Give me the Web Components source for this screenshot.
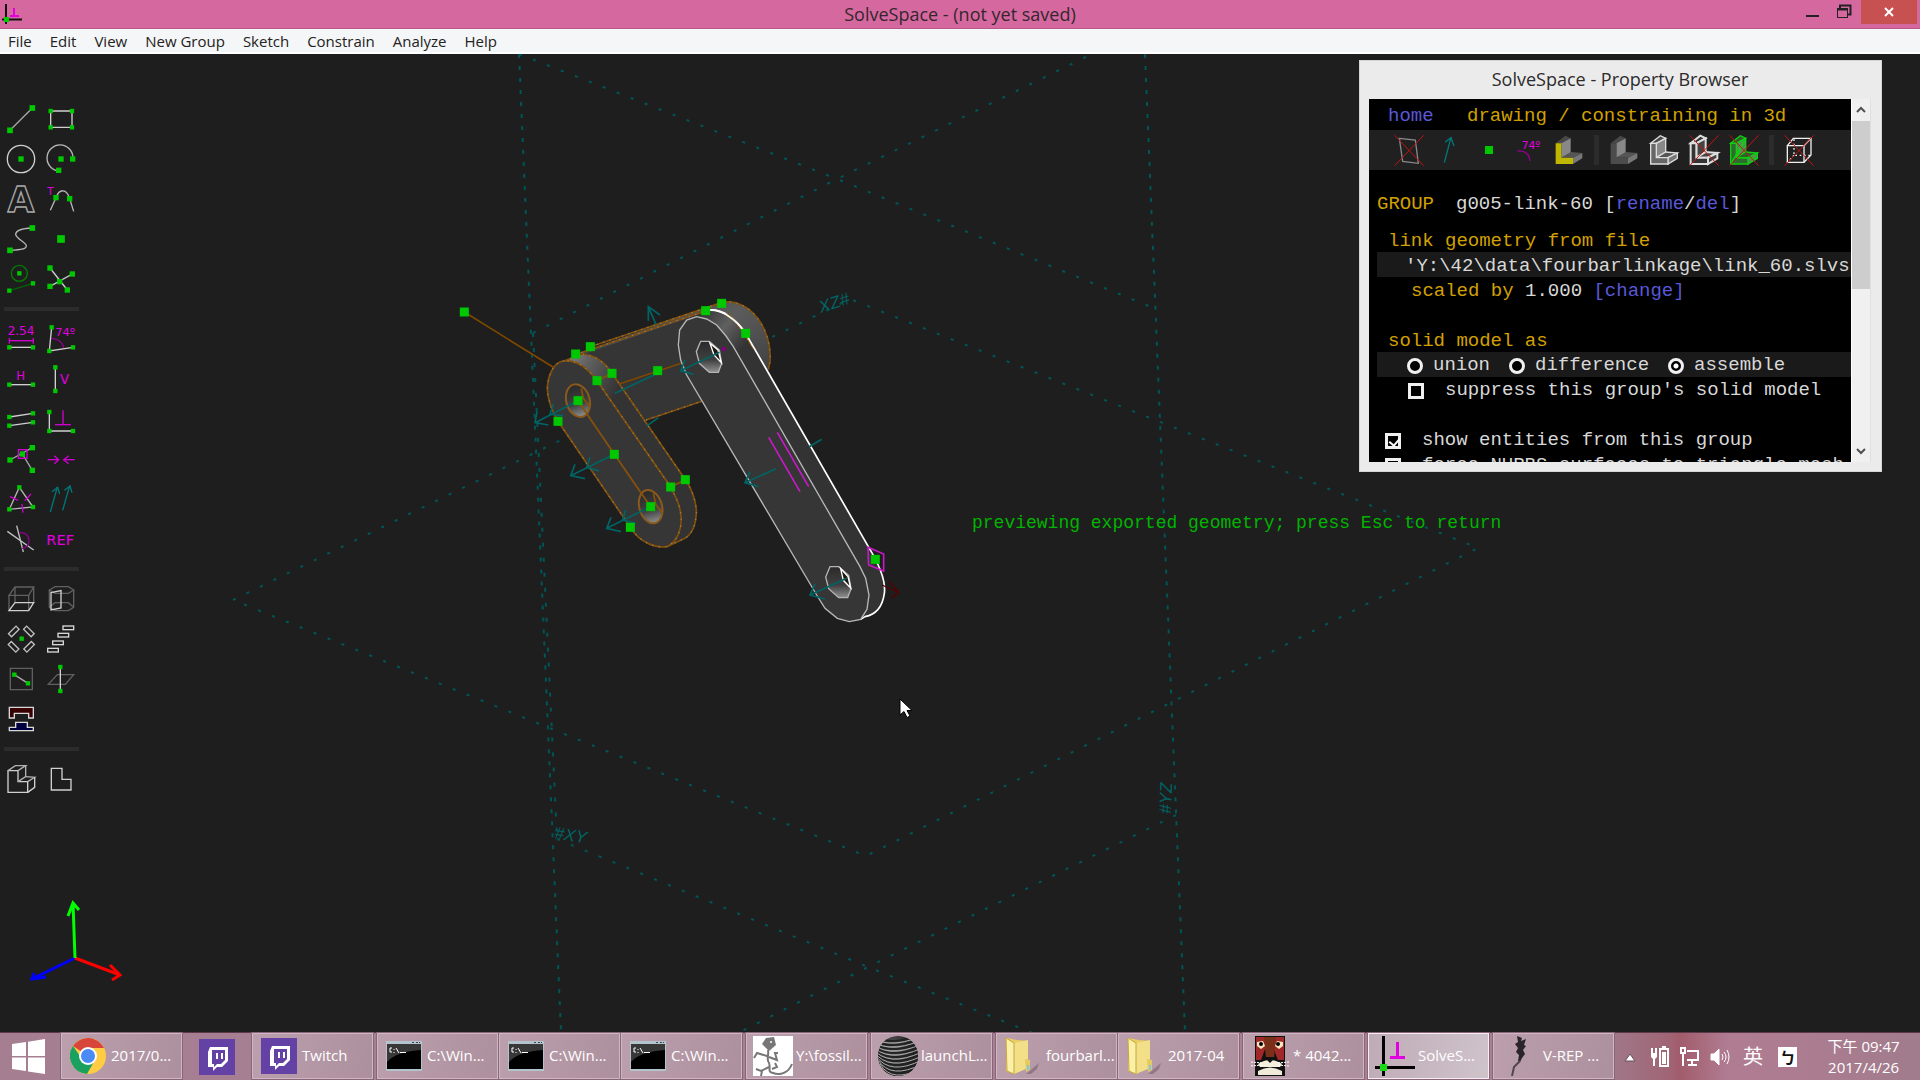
<!DOCTYPE html>
<html lang="en">
<head>
<meta charset="utf-8">
<title>SolveSpace</title>
<style>
html,body{height:100%;margin:0}
body{background:#1e1e1e;font-family:"Open Sans","Noto Sans CJK TC",sans-serif;overflow:hidden}
</style>
</head>
<body>
<ss-desktop></ss-desktop>
<script>
const RESET = `*{box-sizing:border-box}button{font:inherit;color:inherit;background:none;border:0;padding:0;margin:0;cursor:default}svg{display:block}`;
function define(name, css, html, init) {
  const tpl = document.createElement('template');
  customElements.define(name, class extends HTMLElement {
    constructor() {
      super();
      const root = this.attachShadow({ mode: 'open' });
      tpl.innerHTML = `<style>${RESET}${css}</style>${typeof html === 'function' ? html(this) : html}`;
      root.append(tpl.content.cloneNode(true));
      if (init) init(root, this);
    }
  });
}

/* ---- small drawing helpers ---- */
const sq = (s, ...pts) => pts.map(([x, y]) => `<rect x="${x - s / 2}" y="${y - s / 2}" width="${s}" height="${s}" fill="#00c800"/>`).join('');
const pl = (pts, c = '#d0d0d0', w = 4, f = 'none') => `<polyline points="${pts}" fill="${f}" stroke="${c}" stroke-width="${w}"/>`;
const pg = (pts, c = '#d0d0d0', w = 4, f = 'none') => `<polygon points="${pts}" fill="${f}" stroke="${c}" stroke-width="${w}"/>`;
const pa = (d, c = '#b8b8b8', w = 4, f = 'none') => `<path d="${d}" fill="${f}" stroke="${c}" stroke-width="${w}"/>`;
const tx = (x, y, s, t, c = '#e000e0') => `<text x="${x}" y="${y}" font-family="DejaVu Sans" font-size="${s}" fill="${c}">${t}</text>`;
const M = '#d000d0', G = '#606060', T = '#007878';

/* tool palette: [label, x, y, drawing]; three units to a pixel */
const TOOLS = [
 ['Line', 3, 27, pl('30,121 97,54', '#a8a8a8') + sq(17, [30,121], [97,54])],
 ['Rectangle', 123, 27, pg('152,63 216,63 216,112 152,112') + sq(13, [152,63], [216,63], [216,112], [152,112])],
 ['Circle', 3, 147, `<circle cx="63" cy="207" r="41" fill="none" stroke="#d0d0d0" stroke-width="4"/>` + sq(16, [63,207])],
 ['Arc', 123, 147, pa('M219 201A39 39 0 1 0 172 242') + sq(16, [183,207], [218,207], [176,241])],
 ['Text', 3, 267, `<text x="63" y="367" text-anchor="middle" font-family="DejaVu Sans" font-weight="bold" font-size="104" fill="none" stroke="#a8a8a8" stroke-width="4">A</text>`],
 ['Tangent arc', 123, 267, pa('M151 361L168 323C178 295 200 295 209 326L221 364') + tx(142, 315, 31, 'T') + sq(16, [168,323], [209,326])],
 ['Bezier', 3, 387, pa('M97 414C65 415 48 420 47 433C47 446 79 457 79 467C79 478 60 479 30 481') + sq(17, [30,481], [97,414])],
 ['Point', 123, 387, sq(23, [183,447])],
 ['Construction', 3, 507, `<circle cx="58" cy="550" r="24" fill="none" stroke="#008000" stroke-width="4"/>` + pl('28,602 99,580', '#006400') + sq(13, [58,550], [28,602], [99,580])],
 ['Split curves', 123, 507, pl('150,534 202,600') + pl('150,589 217,552') + sq(16, [150,534], [202,600], [150,589], [217,552], [179,575])],
 0,
 ['Distance', 3, 27, tx(23, 76, 36, '2.54') + pl('28,92 100,92', M) + pl('28,84 28,101', M) + pl('100,84 100,101', M) + pl('28,112 99,112') + sq(13, [28,112], [99,112])],
 ['Angle', 123, 27, pl('155,52 148,123 219,112') + pa('M155 85Q185 87 191 113', '#900090') + tx(166, 79, 34, '74º') + sq(13, [155,52], [148,123], [219,112])],
 ['Horizontal', 3, 147, tx(49, 210, 35, 'H') + pl('28,224 99,224') + sq(13, [28,224], [99,224])],
 ['Vertical', 123, 147, tx(180, 222, 40, 'V') + pl('166,172 166,243') + sq(13, [166,172], [166,243])],
 ['Parallel', 3, 267, pl('28,321 99,310') + pl('28,347 99,337') + sq(13, [28,321], [99,310], [28,347], [99,337])],
 ['Perpendicular', 123, 267, pl('148,306 148,363 219,363') + pl('189,301 189,344', M) + pl('165,344 213,344', M) + sq(13, [148,306], [148,363], [219,363])],
 ['On point', 3, 387, pl('30,450 97,413', '#a8a8a8') + pl('67,432 97,481', '#a8a8a8') + sq(16, [30,450], [97,413], [97,481], [67,432]) + `<rect x="55" y="419" width="26" height="26" fill="none" stroke="${M}" stroke-width="4"/>`],
 ['Symmetric', 123, 387, pl('143,449 176,449', M) + pl('163,437 176,449 163,461', M) + pl('224,449 191,449', M) + pl('206,437 191,449 206,461', M)],
 ['Equal', 3, 507, pg('58,532 28,598 99,591', '#b8b8b8') + pl('30,560 54,571', M) + pl('74,572 93,552', M) + pl('66,582 69,608', M) + sq(13, [58,532], [28,598], [99,591])],
 ['Same orientation', 123, 507, pl('151,606 172,531', T) + pl('156,545 173,532 179,552', T) + pl('188,601 209,527', T) + pl('193,541 210,528 216,548', T)],
 ['Other angle', 3, 627, pl('22,664 101,720', '#c0c0c0') + pl('50,647 70,726', '#c0c0c0') + pa('M58 668C95 663 95 717 66 715', '#900090')],
 ['Reference', 123, 627, tx(139, 705, 44, 'REF')],
 0,
 ['Extrude', 3, 27, pg('27,76 86,76 101,51 45,51', G) + pl('27,76 27,122', G) + pl('86,76 86,122', G) + pl('101,51 101,98', G) + pl('45,51 45,98', G) + pg('27,122 86,122 101,98 45,98')],
 ['Lathe', 123, 27, pg('148,60 165,50 205,50 221,60 205,70 165,70', G) + pl('148,60 148,112 165,122 205,122 221,112 221,60', G) + pl('148,112 165,98 205,98 221,112', G) + pg('153,68 183,62 183,114 153,120')],
 ['Step rotating', 3, 147, [[41,184,-45],[87,184,45],[41,230,45],[87,230,-45]].map(([x,y,r]) => `<rect x="-16" y="-6" width="32" height="13" transform="translate(${x} ${y}) rotate(${r})" fill="none" stroke="#c0c0c0" stroke-width="4"/>`).join('') + sq(13, [65,206])],
 ['Step translating', 123, 147, [[205,173],[190,195],[174,218],[159,240]].map(([x,y]) => `<rect x="${x-16}" y="${y-5}" width="32" height="11" fill="none" stroke="#d8d8d8" stroke-width="4"/>`).join('')],
 ['New workplane', 3, 267, pg('31,295 97,295 97,359 31,359', G) + pl('43,314 84,340', '#a8a8a8') + sq(13, [43,314], [84,340])],
 ['Sketch in 3d', 123, 267, pg('145,343 196,343 221,314 172,314', G) + pl('181,291 181,363') + sq(13, [181,291], [181,363])],
 ['Link', 3, 387, pg('28,412 100,412 100,444 86,444 86,430 43,430 43,444 28,444', '#d8d8d8', 4, '#380000') + pg('47,457 82,457 82,472 100,472 100,482 28,482 28,472 47,472', '#d8d8d8', 4, '#000040')],
 ['', 123, 387, ''],
 0,
 ['Nearest isometric view', 3, 567, pg('24,602 54,602 54,635 83,635 83,667 24,667') + pl('24,602 46,587 77,587 54,602', '#b0b0b0') + pl('77,587 77,620 54,635', '#b0b0b0') + pl('77,620 104,622 83,635', '#b0b0b0') + pl('104,622 104,652 83,667')],
 ['Align view', 123, 567, pg('154,595 186,595 186,628 213,628 213,660 154,660')]
];

define('ss-toolbar', `:host{display:grid;grid-template-columns:40px 40px;grid-auto-rows:auto;padding:45px 0 0 1px;align-content:start}
button,span{display:block;width:40px;height:40px}
hr{grid-column:1/3;height:4px;width:75px;margin:8px 0 8px 3px;border:0;background:#2c2c2c}`,
 TOOLS.map(t => t === 0 ? '<hr>' : t[3] ? `<button type="button" aria-label="${t[0]}"><svg width="40" height="40" viewBox="${t[1]} ${t[2]} 120 120">${t[3]}</svg></button>` : '<span></span>').join(''));

/* ---- title bar and menu ---- */
define('ss-titlebar', `:host{display:flex;align-items:flex-start;height:29px;background:#d668a0;border-bottom:1px solid #b8588a;color:#33232b}
.logo{flex:0 0 160px}.t{flex:1;text-align:center;font-size:18px;line-height:28px;color:#35262e}
.c{display:flex;flex:0 0 160px;justify-content:flex-end;padding-right:3px}
.c button{width:33px;height:24px}.c .x{width:56px;background:#c75050}`,
`<div class="logo"><svg width="26" height="28"><path d="M6 4V24M2 19.500H22" stroke="#111" stroke-width="2"/><path d="M14 8V16M10 16H19" stroke="#e000e0" stroke-width="2"/><rect x="4" y="17" width="5" height="5" fill="#0c0"/></svg></div>
<div class="t"><slot></slot></div>
<div class="c"><button aria-label="Minimize"><svg width="33" height="24"><path d="M11 16h13" stroke="#222" stroke-width="2"/></svg></button>
<button aria-label="Restore"><svg width="33" height="24" fill="none" stroke="#222"><rect x="9.500" y="8.500" width="10" height="9"/><path d="M9 9.500h11M12 8V5.500h10.500v9H20M12 5.500h10" stroke-width="2"/></svg></button>
<button class="x" aria-label="Close"><svg width="56" height="24"><path d="M24 8l8 8M32 8l-8 8" stroke="#fff" stroke-width="2"/></svg></button></div>`);

define('ss-menubar', `:host{display:flex;gap:18px;height:25px;padding-left:8px;background:#f5f6f7;color:#222;font-size:15px;line-height:24px;border-bottom:2px solid #fff}`,
 ['File','Edit','View','New Group','Sketch','Constrain','Analyze','Help'].map(t => `<button type="button">${t}</button>`).join(''));

/* ---- 3d canvas ---- */
const dash = (pts, d = '3 12') => `<polyline points="${pts}" stroke-dasharray="${d}"/>`;
const arrow = (a, b, c, d) => `<path d="M${a}L${b}M${c}L${b}L${d}"/>`;
const edge = d => `<path d="${d}" fill="none" stroke="#845008" stroke-width="5"/><path d="${d}" fill="none" stroke="#a09888" stroke-opacity=".6" stroke-width="4" stroke-dasharray="4 16"/>`;
const hole1 = '782,184 808,184 838,210 845,250 835,277 808,277 778,250 769,215';
const face = 'M740 285L722 240L715 195L719 150L740 120L770 110L800 117L830 135L858 168L880 200L1260 860L1277 895L1287 945L1281 988L1262 1018L1228 1025L1192 1015L1155 985L1130 945Z';
define('ss-canvas', `:host{display:block;min-height:0}svg{width:100%;height:100%}`,
`<svg viewBox="0 54 1920 978" preserveAspectRatio="xMidYMid slice">
<defs>
<linearGradient id="b" x1="0" y1="0" x2="1" y2="1"><stop offset="0" stop-color="#333"/><stop offset=".45" stop-color="#5c5c5c"/><stop offset="1" stop-color="#303030"/></linearGradient>
<linearGradient id="h" x1="0" y1="0" x2="0" y2="1"><stop offset="0" stop-color="#2a2a2a"/><stop offset=".6" stop-color="#404040"/><stop offset="1" stop-color="#909090"/></linearGradient>
<linearGradient id="s" gradientUnits="userSpaceOnUse" x1="790" y1="90" x2="920" y2="190"><stop offset="0" stop-color="#333"/><stop offset=".5" stop-color="#606060"/><stop offset="1" stop-color="#333"/></linearGradient>
<linearGradient id="l" gradientUnits="userSpaceOnUse" x1="370" y1="220" x2="540" y2="320"><stop offset="0" stop-color="#888"/><stop offset=".4" stop-color="#606060"/><stop offset="1" stop-color="#333"/></linearGradient>
</defs>
<g fill="none" stroke="#005656" stroke-width="2">
${dash('233,600 850,299 1478,548 866,856 233,600')}
${dash('533,333 837,179 1100,50')}${dash('519,54 837,179 1156,309')}
${dash('557,839 868,967 1040,1036')}${dash('1176,815 868,967 740,1032')}
${dash('519,54 561,1032','4 8')}${dash('533,333 557,839','4 11')}${dash('1145,54 1185,1032','4 8')}
</g>
<g font-family="Liberation Sans" font-size="17" font-style="italic" fill="#006464">
<text transform="translate(554 838) rotate(10)">#XY</text><text transform="translate(821 313) rotate(-18)">XZ#</text><text transform="translate(1171 814) rotate(-88)">#YZ</text></g>
<g transform="translate(440 280) scale(.33333)">
<path d="M425 215L845 66C930 50 998 150 990 245L985 268L790 362L618 420Z" fill="url(#b)"/><path d="M425 225L797 95L800 360L618 420Z" fill="#353535"/>
${edge('M405 224L797 93')}${edge('M451 200L845 68C930 50 998 150 990 245L985 268')}${edge('M618 420L790 362')}
<path d="M340 262L73 96M538 312L728 248" stroke="#7d4800" stroke-width="5"/>
<path d="M770 110L805 90Q865 85 917 160L1290 805Q1340 890 1333 940Q1325 1000 1275 1010L1228 1025Z" fill="url(#s)"/>
<path d="M805 90Q865 85 917 160" fill="none" stroke="#fff" stroke-width="6"/>
${edge('M860 100Q890 120 940 206')}
<path d="M812 90Q865 90 917 160L1285 800Q1340 890 1333 940Q1325 1000 1275 1010L1262 1018" fill="none" stroke="#fff" stroke-width="5"/>
<path d="${face}" fill="#363636" stroke="#b8b8b8" stroke-width="4"/>
<g><polygon points="${hole1}" fill="url(#h)" stroke="#b4b4b4" stroke-width="4"/><path d="M810 190L822 225L844 248L834 210Z" fill="#20180e" stroke="#fff" stroke-width="4"/></g>
<g transform="translate(388 676)"><polygon points="${hole1}" fill="url(#h)" stroke="#b4b4b4" stroke-width="4"/><path d="M814 190L822 225L844 248L836 214Z" fill="#20180e" stroke="#fff" stroke-width="4"/></g>
<path d="M372 243L425 222C470 225 500 255 516 280L736 599C765 640 772 690 768 710C765 750 745 770 735 775L680 800Z" fill="url(#l)"/>
${edge('M372 243L425 222C470 225 500 255 516 280L736 599C765 640 772 690 768 710C765 750 745 770 735 775L680 800')}
<path d="M372 243C340 245 322 290 322 330C325 370 340 400 354 424L571 742C600 790 650 805 680 800C715 785 728 740 722 700C718 665 700 640 692 621L471 302C440 260 410 240 372 243Z" fill="#363636"/>
${edge('M372 243C340 245 322 290 322 330C325 370 340 400 354 424L571 742C600 790 650 805 680 800C715 785 728 740 722 700C718 665 700 640 692 621L471 302C440 260 410 240 372 243Z')}
<g fill="url(#h)" stroke="#8a5a1c" stroke-width="6"><ellipse cx="414" cy="362" rx="35" ry="50" transform="rotate(-16 414 362)"/><ellipse cx="632" cy="680" rx="34" ry="51" transform="rotate(-16 632 680)"/></g>
<path d="M424 325L430 355L450 380M640 640L648 675L668 700M414 362L523 523L632 680M471 302L516 280M692 621L736 599" fill="none" stroke="#8a5208" stroke-width="5"/>
<g fill="none" stroke="#006464" stroke-width="5">
${arrow('414 362','285 428','291 395','325 435')}<path d="M340 372L330 403L370 407"/>
${arrow('648 133','625 80','625 122','660 105')}
${arrow('523 523','392 587','405 553','435 596')}<path d="M450 532L440 562L478 573"/>
${arrow('632 680','500 745','513 712','543 755')}<path d="M557 690L548 720L587 730"/>
<path d="M653 280L525 340M655 413L620 438M1145 478L1108 500"/>
${arrow('838 217','722 272','735 240','760 283')}${arrow('1008 566','915 608','930 575','955 620')}${arrow('1220 895','1110 945','1125 912','1155 957')}</g>
<path d="M986 472L1080 635M1012 457L1106 620M1284 802L1331 822L1331 873L1286 855Z" fill="none" stroke="#c818c8" stroke-width="5"/>
<circle cx="851" cy="207" r="7" fill="#800080"/>
<path d="M1326 915L1376 937M1348 905L1376 937L1353 955" fill="none" stroke="#580000" stroke-width="4"/>
${sq(27,[73,96],[797,92],[845,70],[917,160],[451,200],[407,222],[516,280],[471,302],[414,362],[354,424],[523,523],[653,272],[736,599],[692,621],[632,680],[571,742],[1306,838])}
</g>
<text x="972" y="528" font-family="Liberation Mono" font-size="18" fill="#00b400">previewing exported geometry; press Esc to return</text>
<g fill="none" stroke-width="3"><path d="M75 958L32 979M34 973L32 979L46 977" stroke="#00f"/><path d="M75 958L120 975M110 965L120 975L112 980" stroke="#f00"/><path d="M75 958L73 903M68 916L73 903L79 910" stroke="#0f0"/></g>
<path d="M900 699v16l4-3.500 3 6 3-1.500-3-5.500h5z" fill="#fff" stroke="#000" stroke-width="1"/>
</svg>`);

/* ---- property browser ---- */
const cross = c => pl(`${c-43},256 ${c+44},347`, '#c01414', 3) + pl(`${c+44},256 ${c-43},347`, '#c01414', 3);
const ell = (o, f, faces, line, w = 4) => {
  const s = line || 'none', q = (p, c) => pg(p.map(([x, y]) => `${x + o},${y}`).join(' '), s, w, c);
  return q([[596,280],[625,257],[641,265],[613,280]], faces[0]) + q([[613,280],[641,265],[641,308],[613,323]], faces[1]) + q([[613,323],[641,306],[676,309],[648,323]], faces[2]) + q([[648,323],[676,309],[676,325],[648,342]], faces[3]) + q([[596,280],[613,280],[613,323],[648,323],[648,342],[596,342]], f);
};
const grey = ['#484848', '#888', '#555', '#777'];
const SHOW = [
 ['workplanes', 171, pg('142,265 190,270 199,340 152,334', '#888') + cross(171)],
 ['normals', 289, pl('275,338 295,262', T) + pl('277,277 295,263 304,288', T)],
 ['points', 403, sq(24, [403,300])],
 ['constraints', 520, tx(498, 297, 32, '74º', '#e000e0') + pa('M485 303Q520 300 523 333', '#900090')],
 ['faces', 636, ell(0, '#c0b800', grey)],
 0,
 ['shaded', 797, ell(161, '#4c4c4c', grey)],
 ['edges', 913, ell(277, '#666', grey, '#ddd')],
 ['outlines', 1029, ell(393, '#333', ['#333','#444','#444','#444'], '#ddd', 6) + cross(1029)],
 ['mesh', 1146, ell(510, '#2c6c2c', ['#2a602a','#5b8a5b','#2a602a','#5b8a5b'], '#10d010') + pl('1106,342 1151,265 1123,323 1186,325', '#10d010') + cross(1146)],
 0,
 ['hidden lines', 1305, pg('1270,287 1320,287 1320,337 1270,337', '#eee') + pl('1270,287 1288,265 1341,265 1341,315 1320,337', '#eee') + pl('1320,287 1341,265', '#eee') + `<path d="M1290 268V316H1338M1290 316L1272 335" fill="none" stroke="#eee" stroke-width="4" stroke-dasharray="5 8"/>` + cross(1305)]
];
define('ss-properties', `:host{display:flex;flex-direction:column;width:523px;background:#ebebeb;border:1px solid #d4d4d4;padding:0 10px 9px 9px;color:#2c2c2c}
h2{margin:0;font-weight:400;font-size:18px;line-height:36px;padding-bottom:2px;text-align:center}
.w{display:flex;height:363px}
.p{flex:1;min-width:0;overflow:hidden;background:#000;color:#d8d8d8;font:19px/25px "Liberation Mono",monospace;white-space:pre}
a{color:#5858d8;text-decoration:none}.y{color:#d2a000}
.r{display:flex;height:25px;padding-top:2px}.i0{padding-left:8px}.i1{padding-left:19px}.i2{padding-left:42px}
.top{height:31px;line-height:31px}.top a{width:79px}
.ic{display:flex;height:40px;background:#202020;padding-left:20px;margin-bottom:20px}.ic button{width:40px;height:40px}.ic i{width:5px;margin:5px;background:#2c2c2c;height:30px}
.g{margin-bottom:12px}.g .y{width:79px}.b{margin-left:8px;background:#1a1a1a}.f{padding-left:28px}
.m{margin-bottom:25px}
label{display:flex;align-items:center}
input{appearance:none;margin:0;width:16px;height:16px;border:3px solid #f0f0f0;background:#000;flex:none}
input[type=radio]{border-radius:50%}.o{padding-left:30px}.o label{gap:10px;margin-right:19px}
input[type=radio]:checked{background:radial-gradient(circle,#fff 0 2px,#000 3px)}
.k label{gap:21px}.k.i1{padding-left:16px}.k.i2{padding-left:39px}
input[type=checkbox]:checked::before{content:"";display:block;width:5px;height:8px;margin-left:3px;border:solid #fff;border-width:0 2px 2px 0;transform:rotate(40deg)}
.s{width:20px;background:#f0f0f0;border-left:1px solid #fff;border-right:1px solid #e0e0e0;display:flex;flex-direction:column}
.s button{height:22px;width:100%}.s div{flex:0 0 168px;background:#cdcdcd}.s span{flex:1}`,
`<h2><slot></slot></h2><div class="w"><div class="p"><div class="r i1 top"><a href="#home">home</a><span class="y">drawing / constraining in 3d</span></div><div class="ic">${SHOW.map(s => s ? `<button type="button" aria-label="${s[0]}"><svg width="40" height="40" viewBox="${s[1] - 60} 240 120 120">${s[2]}</svg></button>` : '<i></i>').join('')}</div><div class="r i0 g"><span class="y">GROUP</span><span>g005-link-60 [<a href="#rename">rename</a>/<a href="#del">del</a>]</span></div><div class="r i1 y">link geometry from file</div><div class="r b f">'Y:\\42\\data\\fourbarlinkage\\link_60.slvs</div><div class="r i2 m"><span class="y">scaled by</span><span> 1.000 </span><a href="#change">[change]</a></div><div class="r i1 y">solid model as</div><div class="r b o"><label><input type="radio" name="m">union</label><label><input type="radio" name="m">difference</label><label><input type="radio" name="m" checked>assemble</label></div><div class="r i2 k m"><label><input type="checkbox">suppress this group's solid model</label></div><div class="r i1 k"><label><input type="checkbox" checked>show entities from this group</label></div><div class="r i1 k"><label><input type="checkbox">force NURBS surfaces to triangle mesh</label></div></div>
<div class="s"><button aria-label="Scroll up"><svg width="18" height="22"><path d="M5 13l4-4 4 4" fill="none" stroke="#505050" stroke-width="2"/></svg></button><div></div><span></span><button aria-label="Scroll down"><svg width="18" height="22"><path d="M5 9l4 4 4-4" fill="none" stroke="#505050" stroke-width="2"/></svg></button></div></div>`);

/* ---- taskbar ---- */
const twitch = `<svg width="36" height="36"><rect width="36" height="36" fill="#6441a5"/><path d="M11 8h18v14l-6 6h-5l-4 4v-4H9V13z" fill="#fff"/><path d="M13 11h13v10l-4 4h-4l-3 3v-3h-2z" fill="#6441a5"/><path d="M18 14v6M23 14v6" stroke="#fff" stroke-width="2"/></svg>`;
const folder = `<svg width="36" height="40"><path d="M21 38L34 27L32 33L26 38Z" fill="#5a4650" opacity=".4"/><path d="M1 2L12 4L23 5V30L9 38L1 35Z" fill="#e8cf62"/><path d="M9 7L23 4V32L9 38Z" fill="#f2df88"/><path d="M1 2L9 7V38L2 35Z" fill="#fbf0a8" stroke="#c8a838" stroke-width="1"/><path d="M20 23L25 24V34L21 36Z" fill="#e4c860"/><path d="M23 29v5" stroke="#78c8f0" stroke-width="2"/></svg>`;
const cmd = `<svg width="36" height="32"><rect x="0" y="1" width="36" height="30" fill="#b4c4cc"/><rect x="1" y="4" width="34" height="25" fill="#000"/><path d="M1 4H35V10C20 11 8 14 1 22Z" fill="#383838"/><path d="M6 8H4V12H6M8 9v1M8 12v1M10 8l3 5M14 12.500h6" fill="none" stroke="#fff"/><path d="M26 2.500h2M30 2.500h2M33 2.500h1" stroke="#445"/></svg>`;
const swirl = (c, w, from) => Array.from({ length: 12 }, (_, n) => `<path d="M${-14 + n * 2} ${from + n * 4 - 6}Q${6 + n} ${from + n * 4 + 14} 44 ${from + n * 4 - 2}" stroke="${c}" stroke-width="${w}"/>`).join('');
const ICONS = {
 twitch, folder, cmd,
 chrome: `<svg width="36" height="36" viewBox="0 0 36 36"><circle cx="18" cy="18" r="18" fill="#fc4"/><path d="M18 18L3 8A18 18 0 0 1 34 10H18Z" fill="#d8453a"/><path d="M3 8A18 18 0 0 0 17 36L25 22L18 18L10 18Z" fill="#1aa160"/><circle cx="18" cy="18" r="9" fill="#fff"/><circle cx="18" cy="18" r="7" fill="#4a8af4"/></svg>`,
 fossil: `<svg width="40" height="40"><rect width="40" height="40" fill="#fff"/><path d="M13 2L21 1L23 9L16 15L9 8Z" fill="#777"/><path d="M15 14C16 20 13 23 16 27C18 32 14 36 20 37C28 40 36 36 39 28M14 20L4 17L1 22M16 21L24 24L22 17L25 17M16 31L8 35L3 33M9 35L8 40M19 33L24 31L22 27" fill="none" stroke="#777" stroke-width="2"/><circle cx="18" cy="6" r="1" fill="#fff"/></svg>`,
 ball: `<svg width="40" height="40"><defs><radialGradient id="r" cx=".4" cy=".35"><stop stop-color="#777"/><stop offset="1" stop-color="#1c1c1c"/></radialGradient><clipPath id="c"><circle cx="20" cy="20" r="20"/></clipPath></defs><circle cx="20" cy="20" r="20" fill="url(#r)"/><g clip-path="url(#c)" fill="none">${swirl('#222', 2, 0)}${swirl('#b0b0b0', 1, 2)}</g></svg>`,
 tiger: `<svg width="40" height="40"><rect x="5" y="0" width="30" height="40" fill="#111"/><path d="M6 1H34V24H28L24 14L22 20H18L15 13L11 24H6Z" fill="#a02828"/><path d="M14 1H26L24 22H16Z" fill="#7a3018"/><path d="M7 6l6-1 2 5-4 3-4-3zM33 6l-6-1-2 5 4 3 4-3z" fill="#f4e8c0"/><circle cx="11" cy="8" r="2"/><circle cx="28" cy="8" r="2"/><path d="M8 28Q20 20 32 28L30 31H10Z" fill="#f4f0dc"/><path d="M14 21h12l-6 6z" fill="#111"/><path d="M8 35Q20 28 32 35V39H8Z" fill="#f0ead8"/><path d="M1 26l12 1M1 30l12-1M39 26l-12 1M39 30l-12-1" stroke="#fff" stroke-dasharray="2 1"/></svg>`,
 solve: `<svg width="40" height="40"><path d="M8.500 0V40M0 31.500H40" stroke="#000" stroke-width="3"/><path d="M22.500 6V21M15 21.500H30" stroke="#e000e0" stroke-width="3"/><rect x="5" y="28" width="7" height="7" fill="#18d818"/></svg>`,
 vrep: `<svg width="40" height="40"><path d="M17 0l5 2-1 3 5-2-2 6 2 1-3 4 2 4-3 4-2 4-2-1 1-6-3-3 2-4-3-4 3-2z" fill="#2b2428"/><path d="M20 25L14 31L12 40" stroke="#54464e" stroke-width="2" fill="none"/></svg>`
};
define('ss-task', `:host{display:block;width:121px}:host([gap]){margin-left:3px}
button{display:flex;align-items:center;width:100%;height:46px;padding:0 0 0 6px;border:1px solid #cdb7c3;background:linear-gradient(100deg,#bb9fac,#ac909e);outline:1px solid #8a6579;color:#fff;font-size:15px}
:host([active]) button{background:linear-gradient(100deg,#bfabb6,#cfc3ca);border-color:#f6eef3}
i{width:40px;display:flex;justify-content:center}span{flex:1;padding:0 0 2px 3px;text-align:left;white-space:nowrap}`,
 el => `<button type="button"><i>${ICONS[el.getAttribute('icon')]}</i><span><slot></slot></span></button>`);
define('ss-taskbar', `:host{display:flex;height:48px;border-top:1px solid #5c3a4a;background:linear-gradient(90deg,#a67e92,#a88294 80%,#a07888 84%,#a06474 87%,#a25c6c 87.500%,#b07c92 90%,#ac7c90 94%,#a07c8c);color:#fff}
.start{width:62px;display:flex;align-items:center;justify-content:flex-start;padding-left:12px}
.pin{width:68px;display:flex;align-items:center;justify-content:center}
nav{display:flex;gap:1px;flex:1}
.tray{display:flex;align-items:center;gap:10px;width:306px;padding-left:10px}
.tray button{height:46px;display:flex;align-items:center}.tray button:first-child{margin-right:4px}.ime{font-size:20px;line-height:44px;margin-left:3px}
.bo{width:20px;height:20px;background:#fff;color:#111;font:bold 16px/20px "Noto Sans CJK TC",sans-serif;text-align:center;margin-left:5px}
time{margin-left:auto;width:117px;text-align:center;font-size:15px;line-height:21px}`,
`<button class="start" aria-label="Start"><svg width="34" height="36" viewBox="0 0 34 36" fill="#fff"><path d="M0 5L14 3V17H0ZM16 2.700L33 0V17H16ZM0 18.500H14V32L0 30ZM16 18.500H33V35L16 32.500Z"/></svg></button>
<nav><ss-task icon="chrome">2017/0...</ss-task><button class="pin" aria-label="Twitch">${twitch}</button><ss-task icon="twitch">Twitch</ss-task>
<ss-task gap icon="cmd">C:\\Win...</ss-task><ss-task icon="cmd">C:\\Win...</ss-task><ss-task icon="cmd">C:\\Win...</ss-task>
<ss-task gap icon="fossil">Y:\\fossil...</ss-task><ss-task gap icon="ball">launchL...</ss-task><ss-task gap icon="folder">fourbarl...</ss-task><ss-task icon="folder">2017-04</ss-task>
<ss-task gap icon="tiger">* 4042...</ss-task><ss-task gap active icon="solve">SolveS...</ss-task><ss-task gap icon="vrep">V-REP ...</ss-task></nav>
<div class="tray"><button aria-label="Show hidden icons"><svg width="12" height="10"><path d="M1 9L6 2L11 9Z" fill="#fff" stroke="#66505a"/></svg></button>
<button aria-label="Power"><svg width="20" height="22" fill="none" stroke="#fff" stroke-width="2"><rect x="10" y="3" width="8" height="17"/><path d="M13 7h2v10h-2z" fill="#fff"/><path d="M12 1h4M2 2v5M6 2v5M4 12v8"/><path d="M1 7h6v4l-2 2H3l-2-2z" fill="#fff" stroke="none"/></svg></button>
<button aria-label="Network"><svg width="20" height="22" fill="none" stroke="#fff" stroke-width="2"><path d="M7 5H18V14H7M12 14v4M8 19h9M3 8v12"/><rect x="1" y="2" width="4" height="5"/></svg></button>
<button aria-label="Volume"><svg width="20" height="22" fill="none" stroke="#fff"><path d="M1 8H4L9 3V19L4 14H1Z" fill="#fff"/><path d="M12 8Q14 11 12 14M14 6Q18 11 14 16M17 4Q21 11 17 18"/></svg></button>
<span class="ime">英</span><span class="bo">ㄅ</span><time>下午 09:47<br>2017/4/26</time></div>`);

define('ss-desktop', `:host{display:flex;flex-direction:column;height:100vh;background:#1e1e1e}
main{flex:1;min-height:0;display:grid;position:relative}
ss-canvas,ss-toolbar{grid-area:1/1}ss-toolbar{z-index:1;justify-self:start}
ss-properties{position:absolute;top:6px;right:38px;z-index:2}`,
`<ss-titlebar>SolveSpace - (not yet saved)</ss-titlebar><ss-menubar></ss-menubar>
<main><ss-canvas></ss-canvas><ss-toolbar></ss-toolbar><ss-properties>SolveSpace - Property Browser</ss-properties></main><ss-taskbar></ss-taskbar>`);
</script>
</body>
</html>
